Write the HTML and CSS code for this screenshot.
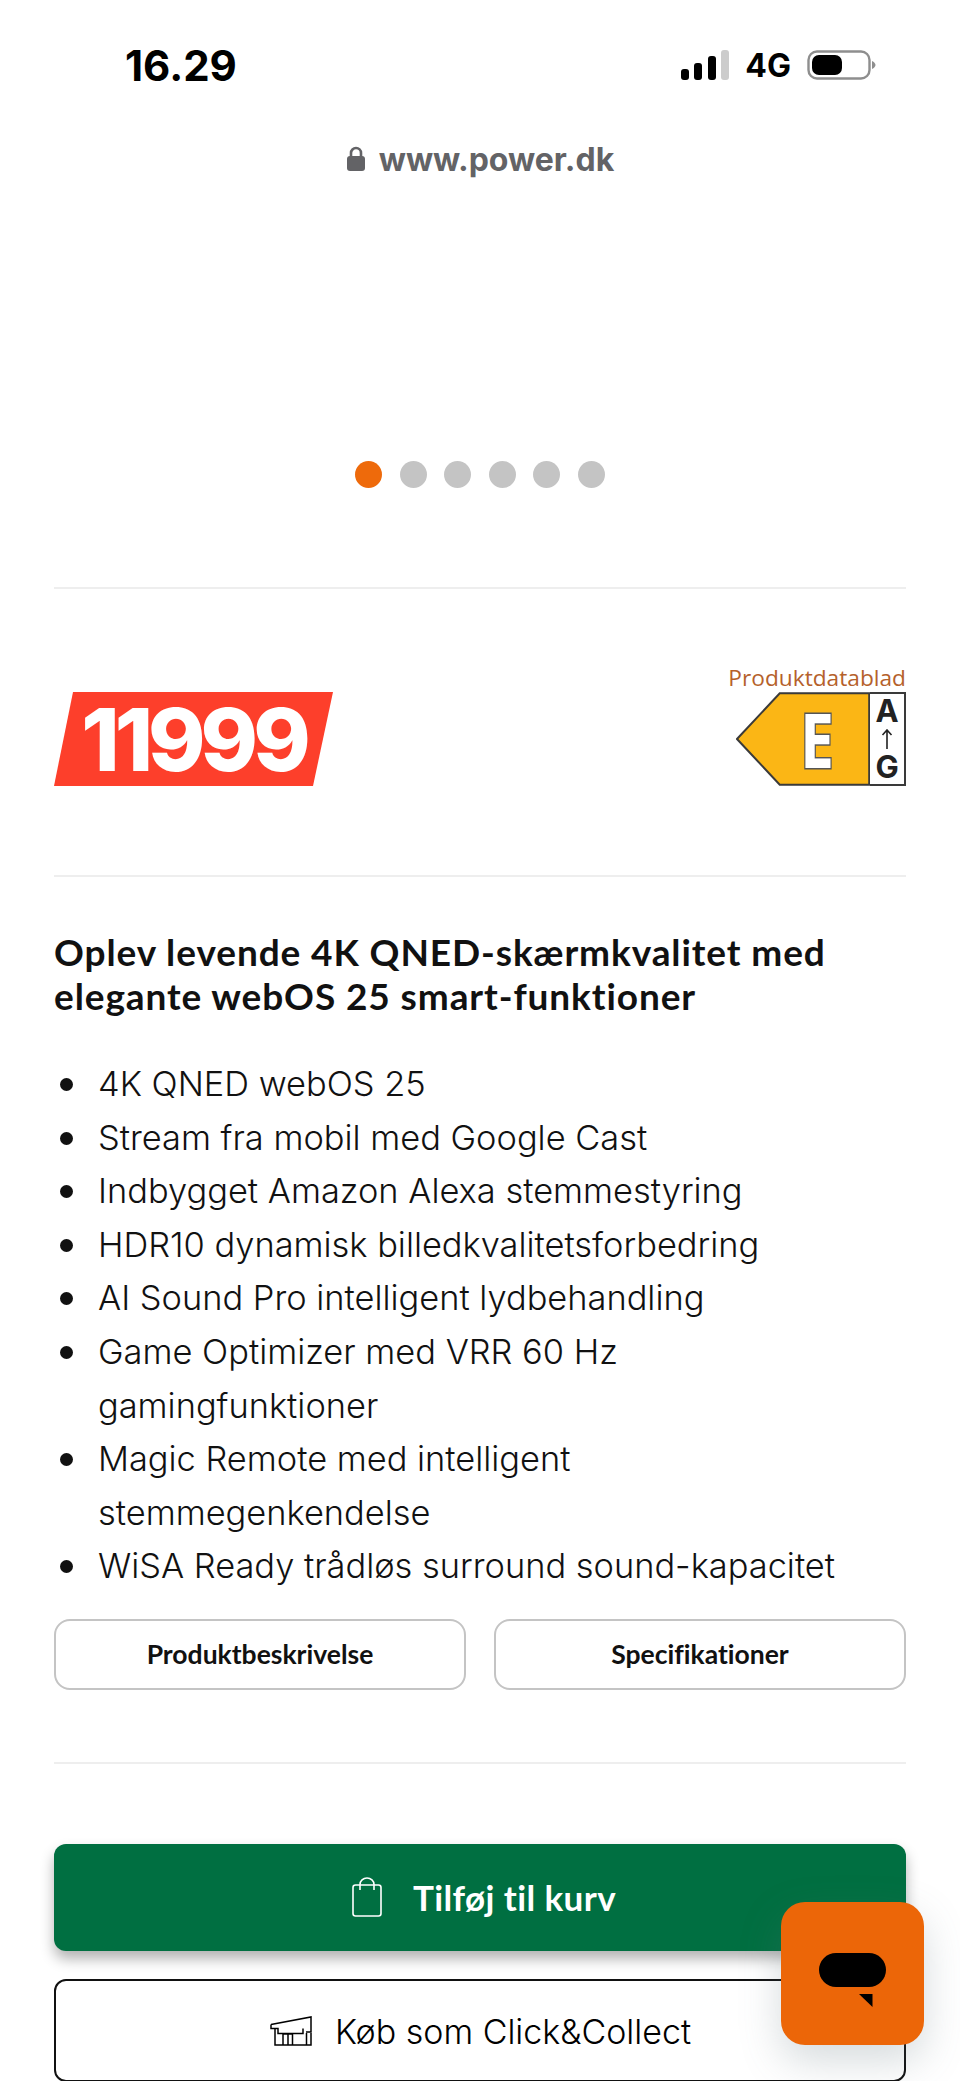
FILE: index.html
```html
<!DOCTYPE html>
<html lang="da">
<head>
    <meta charset="UTF-8">
    <meta name="viewport" content="width=device-width, initial-scale=1.0">
    <title>www.power.dk</title>
    <link rel="stylesheet" href="styles.css">
</head>
<body>
<div class="screen">

    <!-- Statuslinje -->
    <div class="status-bar">
        <span class="time">16.29</span>
        <div class="status-icons">
            <svg width="48" height="30" viewBox="0 0 48 30">
                <rect x="0" y="19" width="8" height="11" rx="3" fill="#000"/>
                <rect x="13" y="13" width="8" height="17" rx="3" fill="#000"/>
                <rect x="27" y="6" width="8" height="24" rx="3" fill="#000"/>
                <rect x="40" y="0" width="8" height="30" rx="3" fill="#ccc"/>
            </svg>
            <span class="network">4G</span>
            <svg width="69" height="30" viewBox="0 0 69 30">
                <rect x="1.5" y="1.5" width="61" height="27" rx="8.5" fill="none" stroke="#8e8e8e" stroke-width="2.4"/>
                <rect x="5" y="5" width="30" height="20" rx="7" fill="#000"/>
                <path d="M65 11c2 1 3.500 2.500 3.500 4s-1.500 3-3.500 4z" fill="#8e8e8e"/>
            </svg>
        </div>
    </div>

    <!-- Adresselinje -->
    <div class="url-bar">
        <svg width="20" height="26" viewBox="0 0 20 26">
            <path d="M5 11V7a5 5 0 0 1 10 0v4" fill="none" stroke="#636366" stroke-width="2.6"/>
            <rect x="1" y="10" width="18" height="15" rx="3" fill="#636366"/>
        </svg>
        <span>www.power.dk</span>
    </div>

    <!-- Billedprikker -->
    <div class="dots">
        <span class="dot active"></span>
        <span class="dot"></span>
        <span class="dot"></span>
        <span class="dot"></span>
        <span class="dot"></span>
        <span class="dot"></span>
    </div>

    <div class="price-row">
        <div class="price"><span>11999</span></div>
        <div class="energy">
            <a class="datasheet">Produktdatablad</a>
            <div class="energy-label">
                <svg class="energy-arrow" width="135" height="94" viewBox="0 0 135 94">
                    <path d="M134 1H44L1 47l43 46h90z" fill="#fbb615" stroke="#3a3a3a" stroke-width="2"/>
                </svg>
                <span class="energy-class">E</span>
                <div class="energy-scale">
                    <span>A</span>
                    <svg width="12" height="20" viewBox="0 0 12 20"><path d="M6 20V1M1.500 6L6 1l4.500 5" fill="none" stroke="#222" stroke-width="1.600"/></svg>
                    <span>G</span>
                </div>
            </div>
        </div>
    </div>

    <div class="description">
        <h2>Oplev levende 4K QNED-skærmkvalitet med elegante webOS 25 smart-funktioner</h2>
        <ul>
            <li>4K QNED webOS 25</li>
            <li>Stream fra mobil med Google Cast</li>
            <li>Indbygget Amazon Alexa stemmestyring</li>
            <li>HDR10 dynamisk billedkvalitetsforbedring</li>
            <li>AI Sound Pro intelligent lydbehandling</li>
            <li>Game Optimizer med VRR 60 Hz gamingfunktioner</li>
            <li>Magic Remote med intelligent stemmegenkendelse</li>
            <li>WiSA Ready trådløs surround sound-kapacitet</li>
        </ul>
        <div class="tabs">
            <button class="tab">Produktbeskrivelse</button>
            <button class="tab">Specifikationer</button>
        </div>
    </div>

    <div class="actions">
        <button class="btn-cart">
            <svg width="30" height="40" viewBox="0 0 30 40">
                <rect x="1" y="8" width="28" height="31" rx="2.500" fill="none" stroke="#fff" stroke-width="1.600"/>
                <path d="M8 13V7.500a7 6.500 0 0 1 14 0V13" fill="none" stroke="#fff" stroke-width="1.600"/>
            </svg>
            Tilføj til kurv
        </button>
        <button class="btn-collect">
            <svg width="44" height="32" viewBox="0 0 44 32">
                <path d="M2 9.500L42 2v15h-5M2 9.500v4h4V30h36V18M37.500 18v12M14 30V19h9.500v11M19 19v11M6 13.500h3v5h25v-5" fill="none" stroke="#000" stroke-width="1.500"/>
            </svg>
            Køb som Click&amp;Collect
        </button>
    </div>

    <!-- Chatknap -->
    <button class="chat-btn">
        <svg width="67" height="54" viewBox="0 0 67 54">
            <rect x="0" y="0" width="67" height="34" rx="17" fill="#000"/>
            <path d="M40 41h13.500v13z" fill="#000"/>
        </svg>
    </button>

</div>
</body>
</html>
```

FILE: styles.css
```css
* {
    box-sizing: border-box;
}

body {
    margin: 0;
    background-color: #fff;
    font-family: Inter, Arial, sans-serif;
    color: #111;
}

.screen {
    position: relative;
    height: 2081px;
    overflow: hidden;
    padding: 0 54px;
}

.status-bar {
    display: flex;
    justify-content: space-between;
    align-items: center;
    height: 130px;
    padding-left: 71px;
}

.time {
    font-size: 42px;
    font-weight: 700;
    color: #000;
}

.status-icons {
    display: flex;
    align-items: center;
    gap: 16px;
    margin-right: 30px;
}

.network {
    font-size: 32px;
    font-weight: 700;
    color: #000;
}

.url-bar {
    display: flex;
    justify-content: center;
    align-items: center;
    gap: 13px;
    height: 58px;
    font-size: 32px;
    font-weight: 700;
    color: #636366;
}

.dots {
    display: flex;
    justify-content: center;
    gap: 17.5px;
    margin-top: 273px;
    padding-bottom: 99px;
    border-bottom: 2px solid #eee;
}

.dot {
    width: 27px;
    height: 27px;
    border-radius: 50%;
    background-color: #c4c4c4;
}

.dot.active {
    background-color: #ee6a0b;
}

.price-row {
    display: flex;
    justify-content: space-between;
    align-items: flex-end;
    height: 288px;
    padding-bottom: 89px;
    border-bottom: 2px solid #eee;
}

.price {
    width: 279px;
    height: 94px;
    display: flex;
    align-items: center;
    justify-content: center;
    background-color: #fd3f2b;
    clip-path: polygon(19px 0, 100% 0, 259px 100%, 0 100%);
}

.price span {
    font-size: 87px;
    font-weight: 800;
    letter-spacing: -5px;
    color: #fff;
}

.energy {
    display: flex;
    flex-direction: column;
    align-items: flex-end;
}

.datasheet {
    font-family: "Open Sans", Arial, sans-serif;
    font-size: 22.7px;
    line-height: 26px;
    color: #b5612b;
    margin-bottom: 1px;
}

.energy-label {
    position: relative;
    display: flex;
    width: 170px;
    height: 94px;
}

.energy-arrow {
    display: block;
}

.energy-class {
    position: absolute;
    left: 60px;
    top: 7px;
    width: 40px;
    font-family: "Open Sans", Arial, sans-serif;
    font-size: 76px;
    line-height: 80px;
    font-weight: 700;
    text-align: center;
    color: #fff;
    transform: scaleX(0.8);
    -webkit-text-stroke: 3px #555;
    paint-order: stroke;
}

.energy-scale {
    width: 36px;
    height: 94px;
    border: 2px solid #3a3a3a;
    border-left: none;
    background-color: #fff;
    display: flex;
    flex-direction: column;
    align-items: center;
    justify-content: center;
    gap: 3px;
    font-size: 31px;
    line-height: 30px;
    font-weight: 700;
    color: #222;
}

.description {
    padding-top: 53px;
}

.description h2 {
    margin: 0;
    font-family: Lato, Arial, sans-serif;
    font-size: 37px;
    line-height: 44px;
    font-weight: 700;
    letter-spacing: 0.9px;
    color: #111;
}

.description ul {
    margin: 39px 0 0;
    padding: 0 60px 0 0;
    list-style: none;
    font-size: 34.4px;
    line-height: 53.6px;
    font-weight: 300;
}

.description li {
    display: flex;
}

.description li::before {
    content: "";
    flex: none;
    width: 13px;
    height: 13px;
    margin: 21px 25px 0 6px;
    border-radius: 50%;
    background-color: #111;
}

.tabs {
    display: flex;
    gap: 28px;
    margin-top: 26px;
    padding-bottom: 72px;
    border-bottom: 2px solid #eee;
}

.tab {
    flex: 1;
    height: 71px;
    background-color: #fff;
    border: 2px solid #c4c4c4;
    border-radius: 16px;
    font-family: Lato, Arial, sans-serif;
    font-size: 26.5px;
    font-weight: 700;
    font-variant-ligatures: none;
    color: #111;
}

.actions {
    display: flex;
    flex-direction: column;
    gap: 28px;
    margin-top: 80px;
}

.btn-cart, .btn-collect {
    display: flex;
    align-items: center;
    justify-content: center;
    width: 100%;
}

.btn-cart {
    height: 107px;
    gap: 31px;
    padding-left: 14px;
    background-color: #006f41;
    border: none;
    border-radius: 12px;
    box-shadow: 0 8px 14px rgba(0, 0, 0, 0.3);
    font-family: Lato, Arial, sans-serif;
    font-size: 35px;
    font-weight: 700;
    letter-spacing: 0.4px;
    color: #fff;
}

.btn-collect {
    height: 103px;
    gap: 22px;
    padding-top: 3px;
    background-color: #fff;
    border: 2px solid #111;
    border-radius: 12px;
    font-family: Inter, Arial, sans-serif;
    font-size: 34px;
    font-weight: 300;
    color: #000;
}

.chat-btn {
    position: absolute;
    left: 781px;
    top: 1902px;
    width: 143px;
    height: 143px;
    padding: 13px 0 0;
    border: none;
    border-radius: 24px;
    background-color: #ec6608;
    box-shadow: 0 16px 40px rgba(90, 110, 120, 0.25);
    display: flex;
    align-items: center;
    justify-content: center;
}
```
